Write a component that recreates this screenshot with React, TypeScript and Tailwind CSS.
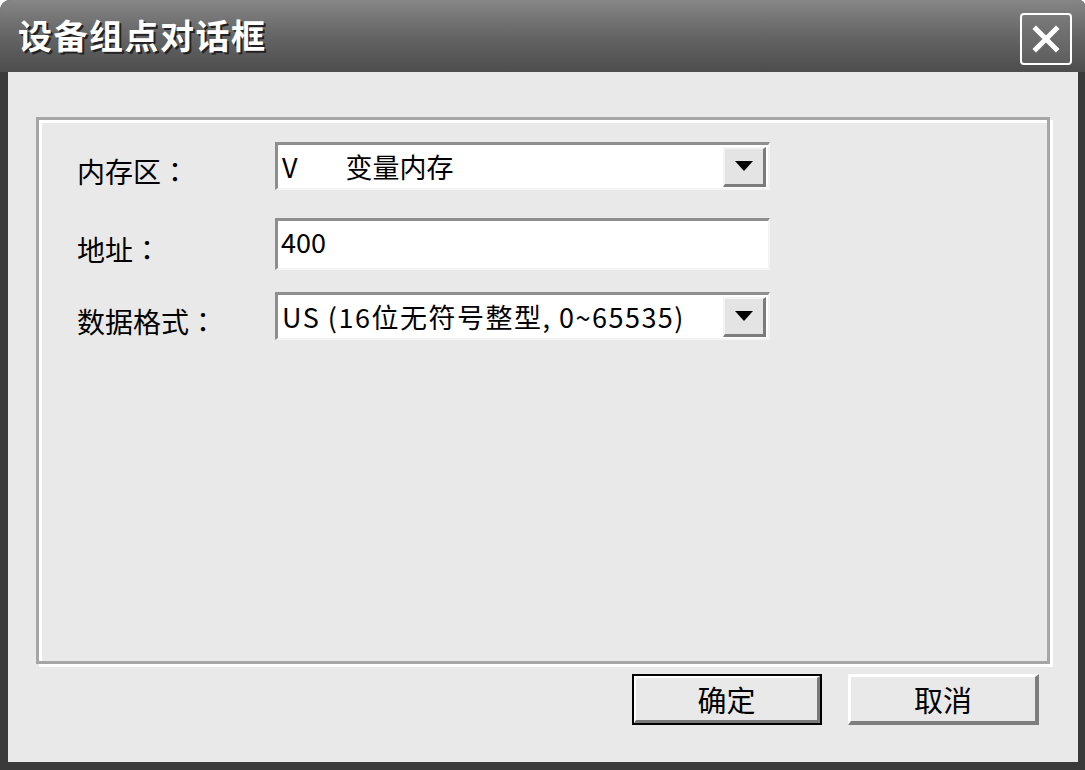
import React from "react";

const font = { fontFamily: '"Noto Sans CJK SC", "Noto Sans", sans-serif' };
const jp = { fontFamily: '"Noto Sans CJK JP", "Noto Sans CJK SC", sans-serif' };

function DropArrow() {
  return (
    <div className="w-[43px] h-[40px] bg-[#e4e4e4] border-t-[2px] border-l-[2px] border-t-[#f4f4f4] border-l-[#f4f4f4] border-b-[3px] border-r-[3px] border-b-[#7c7c7c] border-r-[#7c7c7c] flex items-center justify-center">
      <svg width="18" height="10" viewBox="0 0 18 10">
        <polygon points="0,0 18,0 9,10" fill="#000" />
      </svg>
    </div>
  );
}

function Field({ children, combo }: { children: React.ReactNode; combo?: boolean }) {
  return (
    <div className="w-[495px] h-[48px] bg-white border-t-[3px] border-l-[3px] border-t-[#8e8e8e] border-l-[#8e8e8e] border-b-[2px] border-r-[2px] border-b-[#f4f4f4] border-r-[#f4f4f4] flex items-center justify-between pl-[4px] pr-[2px]">
      <div className="flex items-center text-[27px] leading-none text-black">{children}</div>
      {combo && <DropArrow />}
    </div>
  );
}

function Label({ text }: { text: string }) {
  return (
    <div className="w-[198px] text-[28px] leading-none text-black pt-[10px] flex">
      <span>{text}</span>
      <span style={jp}>：</span>
    </div>
  );
}

export default function App() {
  return (
    <div className="w-[1085px] h-[770px] bg-[#3a3a3a] flex flex-col overflow-hidden rounded-tl-[10px] rounded-tr-[6px]" style={font}>
      {/* title bar */}
      <div className="h-[72px] shrink-0 bg-gradient-to-b from-[#868686] via-[#656565] to-[#4d4d4d] flex items-center justify-between pl-[18px] pr-[13px]">
        <div className="text-white font-bold text-[34px] tracking-[1.5px] leading-none pb-[2px] [text-shadow:2px_2px_0_#222]">
          设备组点对话框
        </div>
        <div className="w-[52px] h-[52px] mt-[6px] rounded-[4px] border-[2px] border-white bg-gradient-to-b from-[#7a7a7a] to-[#5e5e5e] flex items-center justify-center">
          <svg width="28" height="28" viewBox="0 0 28 28">
            <path d="M4 4 L24 24 M24 4 L4 24" stroke="#fff" strokeWidth="5" strokeLinecap="square" />
          </svg>
        </div>
      </div>
      {/* body */}
      <div className="flex-1 flex ml-[8px] mr-[7px] mb-[8px] bg-[#e9e9e9] flex-col pl-[28px] pr-[30px] pt-[45px]">
        <div className="w-[1014px] h-[547px] border-[3px] border-[#a6a6a6] shadow-[inset_3px_3px_0_#ffffff,3px_3px_0_#ffffff] flex flex-col pl-[38px] pt-[22px]">
          <div className="flex items-center h-[48px]">
            <Label text="内存区" />
            <Field combo>
              <span>V</span>
              <span className="ml-[48px]">变量内存</span>
            </Field>
          </div>
          <div className="flex items-center h-[52px] mt-[28px]">
            <Label text="地址" />
            <div className="w-[495px] h-[52px] bg-white border-t-[3px] border-l-[3px] border-t-[#8e8e8e] border-l-[#8e8e8e] border-b-[2px] border-r-[2px] border-b-[#f4f4f4] border-r-[#f4f4f4] flex items-center pl-[3px] pb-[6px]">
              <span className="text-[27px] leading-none text-black">400</span>
            </div>
          </div>
          <div className="flex items-center h-[48px] mt-[22px]">
            <Label text="数据格式" />
            <Field combo>
              <span className="tracking-[1.5px]">US (16位无符号整型, 0~65535)</span>
            </Field>
          </div>
        </div>
        <div className="flex justify-end gap-[26px] mt-[10px] pr-[9px]">
          <div className="w-[190px] h-[51px] border-[2px] border-black">
            <div className="w-full h-full bg-[#e9e9e9] border-t-[2px] border-l-[2px] border-t-white border-l-white border-b-[3px] border-r-[3px] border-b-[#7a7a7a] border-r-[#7a7a7a] flex items-center justify-center text-[29px] leading-none text-black">
              确定
            </div>
          </div>
          <div className="w-[191px] h-[51px] bg-[#e9e9e9] border-t-[3px] border-l-[3px] border-t-white border-l-white border-b-[4px] border-r-[4px] border-b-[#7e7e7e] border-r-[#7e7e7e] flex items-center justify-center text-[29px] leading-none text-black">
            取消
          </div>
        </div>
      </div>
    </div>
  );
}
